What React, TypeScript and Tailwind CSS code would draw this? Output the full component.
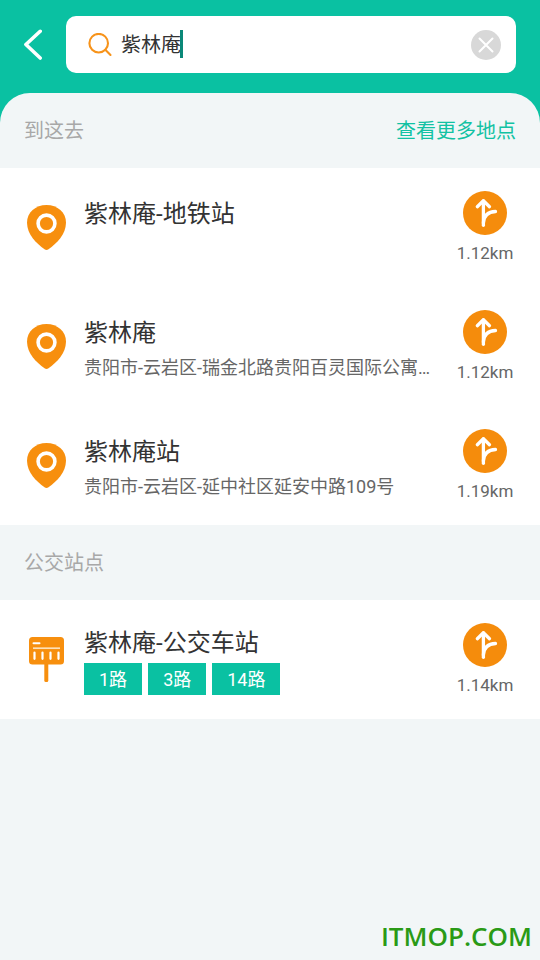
import { useState } from "react";

type Place = {
  id: string;
  name: string;
  address?: string;
  distance: string;
  lines?: string[];
};

const places: Place[] = [
  { id: "metro", name: "紫林庵-地铁站", distance: "1.12km" },
  { id: "zla", name: "紫林庵", address: "贵阳市-云岩区-瑞金北路贵阳百灵国际公寓…", distance: "1.12km" },
  { id: "station", name: "紫林庵站", address: "贵阳市-云岩区-延中社区延安中路109号", distance: "1.19km" },
];

const stops: Place[] = [
  { id: "bus", name: "紫林庵-公交车站", distance: "1.14km", lines: ["1路", "3路", "14路"] },
];

function BackIcon() {
  return (
    <svg width="18" height="32" viewBox="0 0 18 32" fill="none" stroke="white" strokeWidth="3.6" strokeLinecap="round" strokeLinejoin="round" aria-hidden="true">
      <path d="M16.2 2.3 1.9 15.5 16.2 29" />
    </svg>
  );
}

function SearchIcon() {
  return (
    <svg width="24" height="24" viewBox="0 0 24 24" fill="none" stroke="#f7931a" strokeWidth="2.1" strokeLinecap="round" aria-hidden="true">
      <circle cx="10.7" cy="10.2" r="9.3" />
      <path d="M17.3 16.8 22.5 22" />
    </svg>
  );
}

function ClearIcon() {
  return (
    <svg width="30" height="30" viewBox="0 0 30 30" aria-hidden="true">
      <circle cx="15" cy="15" r="15" fill="#d8d8d8" />
      <path d="M8.5 8.5 21.5 21.5M21.5 8.5 8.5 21.5" stroke="white" strokeWidth="2" strokeLinecap="round" />
    </svg>
  );
}

function PinIcon() {
  return (
    <svg width="39" height="45" viewBox="0 0 39 45" aria-hidden="true">
      <path d="M19.5 0C8.5 0 0 7.5 0 17.5C0 29.5 9.5 38.5 17.5 44.3Q19.5 45.6 21.5 44.3C29.5 38.5 39 29.5 39 17.5C39 7.5 30.5 0 19.5 0Z" fill="#f78f0e" />
      <circle cx="19.5" cy="18.5" r="8.4" fill="none" stroke="white" strokeWidth="3.6" />
    </svg>
  );
}

function BusStopIcon() {
  return (
    <svg width="35" height="45" viewBox="0 0 35 45" aria-hidden="true">
      <rect x="15.3" y="24" width="4" height="21" rx="1.5" fill="#f78f0e" />
      <rect width="35" height="27.5" rx="3.5" fill="#f78f0e" />
      <path d="M4.5 6.2H10.5" stroke="white" strokeWidth="2" strokeLinecap="round" />
      <path d="M4 11.2H31" stroke="#fde0b8" strokeWidth="1.7" />
      <path d="M5.5 15.5V21.8M13.5 15.5V21.8M21.5 15.5V21.8M29.5 15.5V21.8" stroke="white" strokeWidth="2.2" strokeLinecap="round" />
    </svg>
  );
}

function RouteIcon() {
  return (
    <svg width="44" height="44" viewBox="0 0 44 44" aria-hidden="true">
      <circle cx="22" cy="22" r="22" fill="#f58c0c" />
      <g fill="none" stroke="white" strokeWidth="3.3" strokeLinecap="round" strokeLinejoin="round">
        <path d="M20.4 34.3V10" />
        <path d="M14.3 15.7 20.4 9.7 26.5 15.7" />
        <path d="M20.4 32C20.8 25.5 24.5 20.8 32.5 20.5" />
      </g>
    </svg>
  );
}

function SectionHeader({ title, more }: { title: string; more?: string }) {
  return (
    <div className="flex h-[75px] items-center justify-between px-6 text-xl">
      <h2 className="text-[#a8a8a8]">{title}</h2>
      {more && (
        <a href="#more" className="text-[#12c2a3]">
          {more}
        </a>
      )}
    </div>
  );
}

function PlaceRow({ place }: { place: Place }) {
  return (
    <li className="flex min-h-[119px] bg-white pt-[23px] pr-[26px] pb-5 pl-6">
      <div className="flex h-[73px] w-[45px] shrink-0 items-center justify-center">
        {place.lines ? <BusStopIcon /> : <PinIcon />}
      </div>
      <div className={place.lines ? "ml-[15px] min-w-0 flex-1 pt-0.5" : "ml-[15px] min-w-0 flex-1 pt-[5px]"}>
        <h3 className="truncate text-2xl leading-9 text-[#333333]">{place.name}</h3>
        {place.address && <p className="truncate text-lg leading-[34px] text-[#666666]">{place.address}</p>}
        {place.lines && (
          <ul className="mt-0.5 flex gap-1.5">
            {place.lines.map((line) => (
              <li key={line} className="h-8 bg-[#0ac1a2] px-[15px] pt-0.5 text-lg leading-[30px] text-white">
                {line}
              </li>
            ))}
          </ul>
        )}
      </div>
      <button type="button" aria-label={`路线 ${place.name}`} className="ml-3 flex h-[72px] min-w-[58px] shrink-0 flex-col items-center gap-2">
        <RouteIcon />
        <span className="text-[17px] leading-5 text-[#666666]">{place.distance}</span>
      </button>
    </li>
  );
}

export default function App() {
  const [query, setQuery] = useState("紫林庵");

  return (
    <div className="relative min-h-screen bg-[#f2f6f7] font-['Roboto','Noto_Sans_CJK_SC',sans-serif]">
      <header className="bg-[#0ac1a2]">
        <div className="flex items-center py-4 pr-6 pl-6">
          <button type="button" aria-label="返回" className="shrink-0">
            <BackIcon />
          </button>
          <div className="ml-6 flex h-[57px] min-w-0 flex-1 items-center rounded-[10px] bg-white pr-[15px] pl-[22px]">
            <SearchIcon />
            <div className="relative ml-[9px] min-w-0 flex-1">
              <input
                type="text"
                aria-label="搜索地点"
                value={query}
                onChange={(e) => setQuery(e.target.value)}
                className="block h-[29px] w-full pb-0.5 text-xl leading-7 text-[#333333] outline-none"
              />
              <span className="absolute top-0 left-[59px] h-7 w-[3px] bg-[#0a8878]" />
            </div>
            <button type="button" aria-label="清除" onClick={() => setQuery("")} className="shrink-0">
              <ClearIcon />
            </button>
          </div>
        </div>
        <div className="mt-1 rounded-t-[30px] bg-[#f2f6f7]">
          <SectionHeader title="到这去" more="查看更多地点" />
        </div>
      </header>
      <main>
        <ul>
          {places.map((p) => (
            <PlaceRow key={p.id} place={p} />
          ))}
        </ul>
        <SectionHeader title="公交站点" />
        <ul>
          {stops.map((p) => (
            <PlaceRow key={p.id} place={p} />
          ))}
        </ul>
      </main>
      <p className="absolute right-2 bottom-1.5 font-['Open_Sans',sans-serif] text-[26px] leading-9 font-semibold text-[#2a9a16]">
        ITMOP.COM
      </p>
    </div>
  );
}
